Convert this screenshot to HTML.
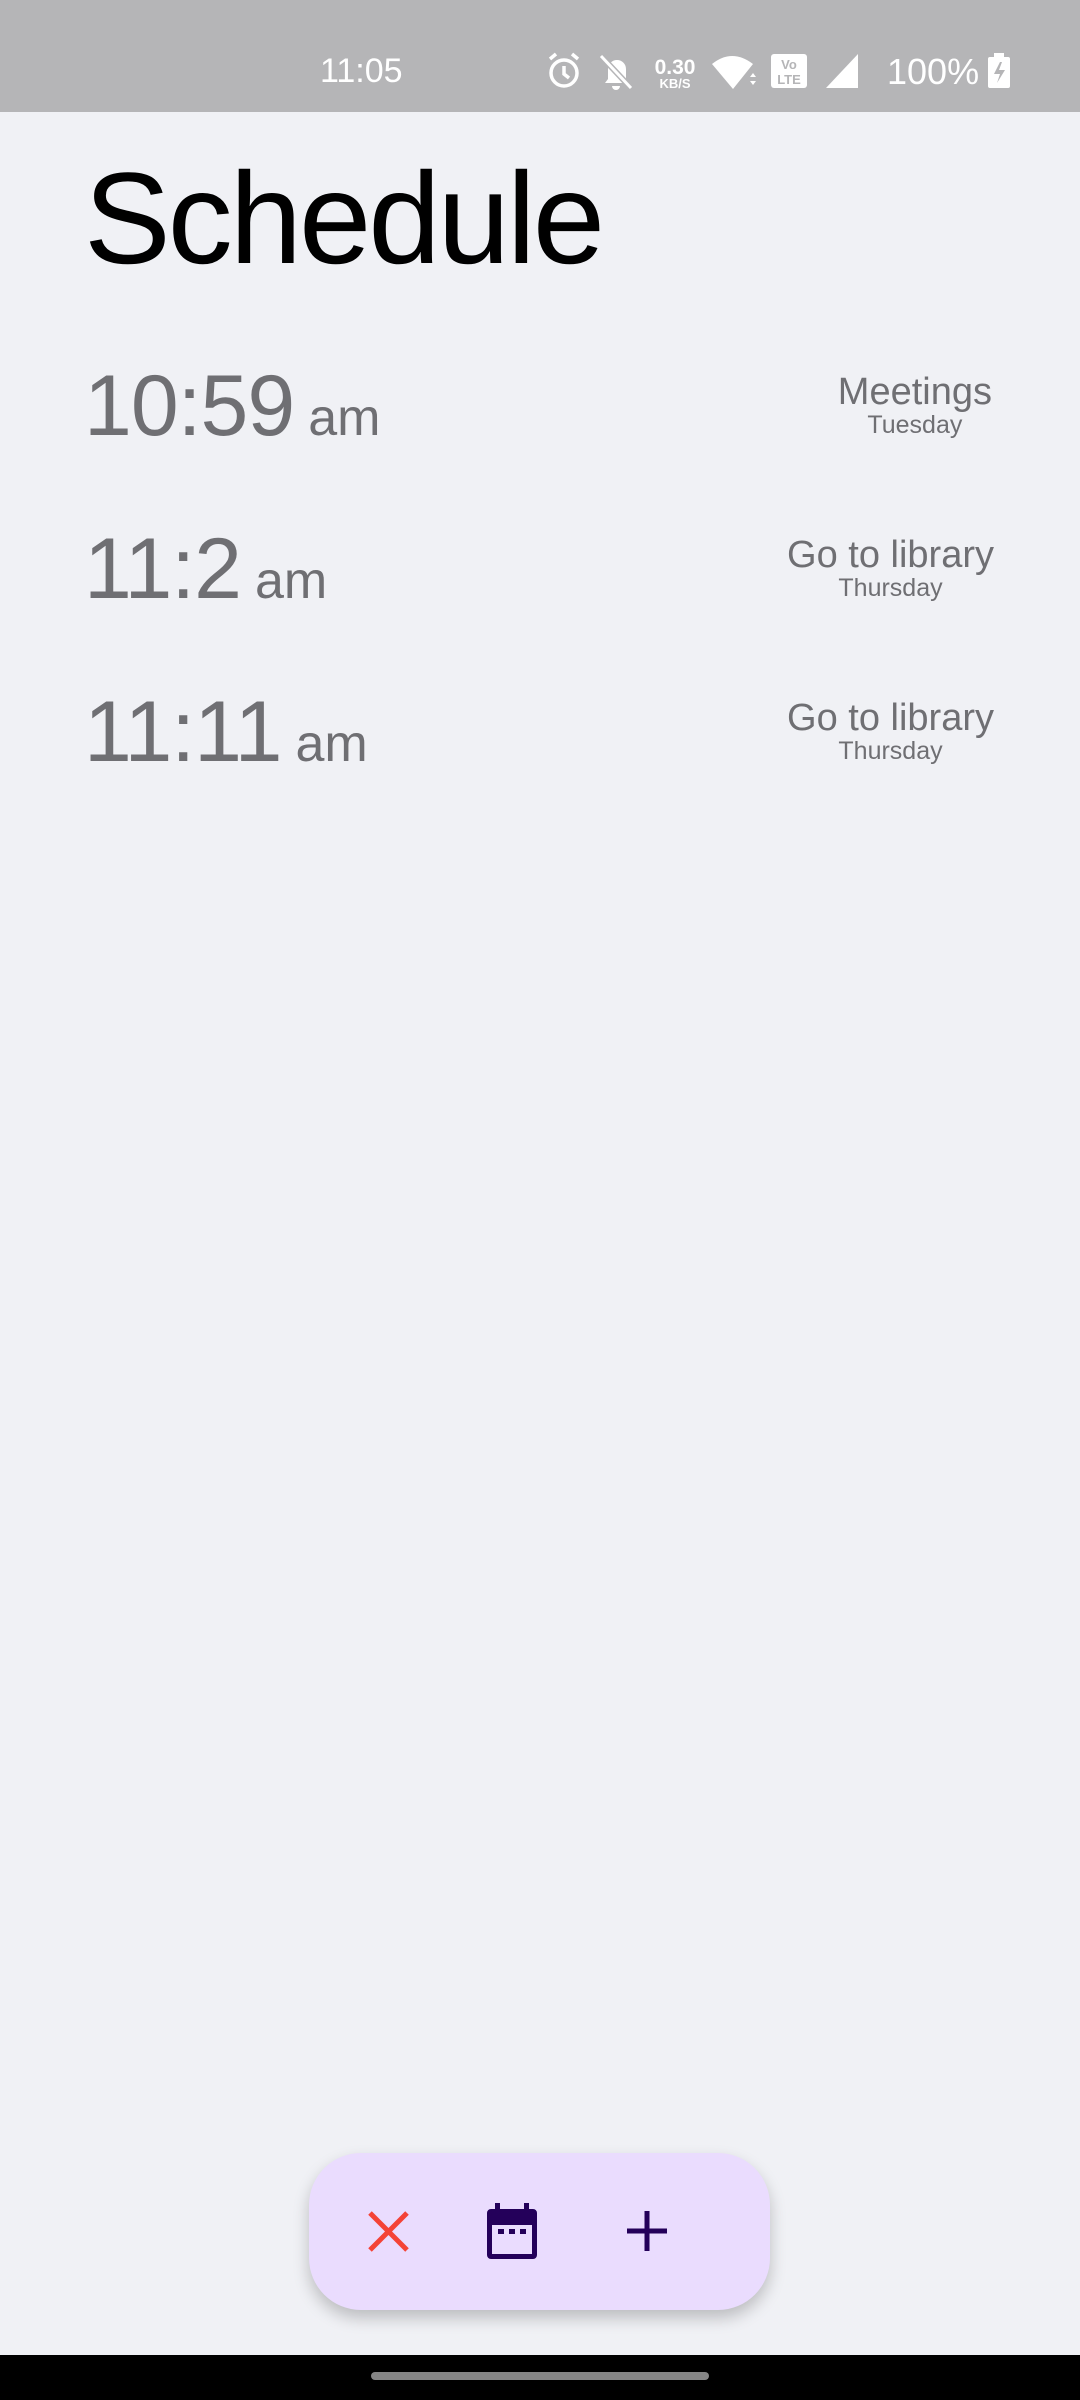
<!DOCTYPE html>
<html><head><meta charset="utf-8"><style>
*{margin:0;padding:0;box-sizing:border-box}
body{width:1080px;height:2400px;background:#f0f1f5;position:relative;overflow:hidden;font-family:"Liberation Sans",sans-serif}
.a{position:absolute;line-height:1.117;white-space:nowrap}
.g{color:#6f6f73}
.t{font-size:86px;letter-spacing:-1px}
.t span{font-size:52px;letter-spacing:0;margin-left:14px}
.s{font-size:25px;line-height:1.2;display:block;margin-top:-3px}
</style></head><body>
<div style="position:absolute;left:0;top:0;width:1080px;height:112px;background:#b5b5b7"></div>
<div class="a" style="left:320px;top:53px;font-size:34px;color:#fff">11:05</div>
<svg style="position:absolute;left:540px;top:50px" width="480" height="42" viewBox="540 50 480 42">
 <g fill="none" stroke="#fff" stroke-width="3.5">
  <circle cx="564" cy="73" r="13"/><path d="M564 66v8l5 4M550 59l6-5M578 59l-6-5"/>
 </g>
 <path d="M605 83h24l-3-4v-10a9 9 0 0 0-18 0v10z M612 86h8a4 4 0 0 1-8 0z" fill="#fff"/>
 <path d="M601 56l30 32" stroke="#b5b5b7" stroke-width="6"/><path d="M601 56l30 32" stroke="#fff" stroke-width="3"/>
 <text x="675" y="74" font-size="21" fill="#fff" text-anchor="middle" font-family="Liberation Sans" font-weight="bold">0.30</text>
 <text x="675" y="88" font-size="13" fill="#fff" text-anchor="middle" font-family="Liberation Sans" font-weight="bold">KB/S</text>
 <path d="M712 64q20-16 41 0l-20 25z" fill="#fff"/>
 <path d="M750 77l3-4 3 4zM750 81l3 4 3-4z" fill="#fff"/>
 <rect x="771" y="54" width="36" height="34" rx="3" fill="#fff"/>
 <text x="789" y="69" font-size="13" fill="#b5b5b7" text-anchor="middle" font-weight="bold" font-family="Liberation Sans">Vo</text>
 <text x="789" y="84" font-size="13" fill="#b5b5b7" text-anchor="middle" font-weight="bold" font-family="Liberation Sans">LTE</text>
 <path d="M826 88l32-34v34z" fill="#fff"/>
 <text x="887" y="84" font-size="36" fill="#fff" font-family="Liberation Sans">100%</text>
 <rect x="988" y="57" width="22" height="31" rx="2" fill="#fff"/><rect x="994" y="53" width="10" height="5" fill="#fff"/>
 <path d="M1000 62l-6 12h6l-3 9 8-13h-6l3-8z" fill="#b5b5b7"/>
</svg>

<div class="a" style="left:84px;top:146px;font-size:130px;color:#000;letter-spacing:-3px">Schedule</div>

<div class="a g t" style="left:84px;top:358px">10:59<span>am</span></div>
<div class="a g" style="right:88px;top:371px;font-size:38px;text-align:right">
 <div style="display:inline-block;text-align:center">Meetings<span class="s">Tuesday</span></div></div>

<div class="a g t" style="left:84px;top:521px">11:2<span>am</span></div>
<div class="a g" style="right:86px;top:534px;font-size:38px;text-align:right">
 <div style="display:inline-block;text-align:center">Go to library<span class="s">Thursday</span></div></div>

<div class="a g t" style="left:84px;top:684px">11:11<span>am</span></div>
<div class="a g" style="right:86px;top:697px;font-size:38px;text-align:right">
 <div style="display:inline-block;text-align:center">Go to library<span class="s">Thursday</span></div></div>

<div style="position:absolute;left:309px;top:2153px;width:461px;height:157px;border-radius:52px;background:#eadcfe;box-shadow:0 8px 16px rgba(0,0,0,0.22)"></div>
<svg style="position:absolute;left:300px;top:2180px" width="400" height="100" viewBox="300 2180 400 100">
 <path d="M370 2213l37 37M407 2213l-37 37" stroke="#f44336" stroke-width="5"/>
 <path d="M491 2209h42a4 4 0 0 1 4 4v42a4 4 0 0 1-4 4h-42a4 4 0 0 1-4-4v-42a4 4 0 0 1 4-4z M492 2225v29h40v-29z" fill="#24005a" fill-rule="evenodd"/>
 <rect x="495" y="2203" width="5" height="8" fill="#24005a"/><rect x="524" y="2203" width="5" height="8" fill="#24005a"/>
 <rect x="498" y="2229" width="6" height="5" fill="#24005a"/><rect x="509" y="2229" width="6" height="5" fill="#24005a"/><rect x="520" y="2229" width="6" height="5" fill="#24005a"/>
 <path d="M647 2211v40M627 2231h40" stroke="#24005a" stroke-width="5"/>
</svg>
<div style="position:absolute;left:0;top:2355px;width:1080px;height:45px;background:#000"></div>
<div style="position:absolute;left:371px;top:2372px;width:338px;height:8px;border-radius:4px;background:#858585"></div>
</body></html>
